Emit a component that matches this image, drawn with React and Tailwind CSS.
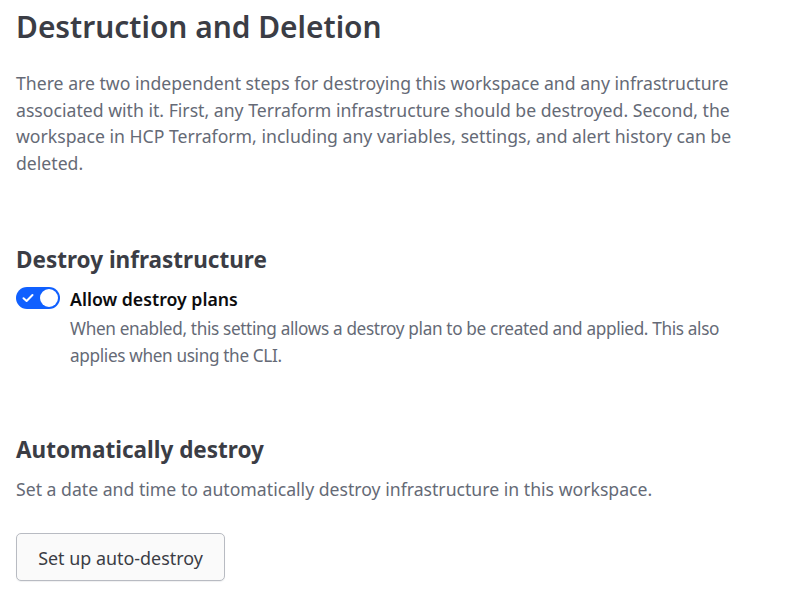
import React from "react";

export default function App() {
  return (
    <div
      className="w-[794px] min-h-[599px] bg-white pl-4 pr-[18px] pt-[8px]"
      style={{ fontFamily: '"Noto Sans", sans-serif' }}
    >
      <h1 className="text-[29.9px] font-semibold leading-[38px] text-[#3b3d45]">
        Destruction and Deletion
      </h1>
      <p className="mt-[24px] text-[17.65px] leading-[26.67px] text-[#656a76]">
        There are two independent steps for destroying this workspace and any infrastructure
        associated with it. First, any Terraform infrastructure should be destroyed. Second, the
        workspace in HCP Terraform, including any variables, settings, and alert history can be
        deleted.
      </p>

      <h2 className="mt-[68px] text-[22.5px] font-bold leading-[30px] text-[#3b3d45]">
        Destroy infrastructure
      </h2>
      <div className="mt-[10px] flex gap-[10px]">
        <div className="mt-[2px] flex h-[22px] w-[44px] shrink-0 items-center justify-between rounded-full bg-[#1060ff] pl-[6px] pr-[2px]">
          <svg width="12" height="10" viewBox="0 0 12 10" fill="none">
            <path
              d="M1.5 5.2 L4.6 8 L10.5 2"
              stroke="white"
              strokeWidth="2"
              strokeLinecap="round"
              strokeLinejoin="round"
            />
          </svg>
          <div className="h-[18px] w-[18px] rounded-full bg-white" />
        </div>
        <div>
          <div className="pt-[1px] text-[17.72px] font-semibold leading-[26.67px] text-[#0c0c0e]">
            Allow destroy plans
          </div>
          <p className="mt-[4px] text-[17.2px] leading-[26.67px] tracking-[-0.35px] text-[#656a76]">
            When enabled, this setting allows a destroy plan to be created and applied. This also
            applies when using the CLI.
          </p>
        </div>
      </div>

      <h2 className="mt-[65px] text-[22.5px] font-bold leading-[30px] text-[#3b3d45]">
        Automatically destroy
      </h2>
      <p className="mt-[11px] text-[17.65px] leading-[26.67px] text-[#656a76]">
        Set a date and time to automatically destroy infrastructure in this workspace.
      </p>
      <button
        type="button"
        className="mt-[31px] flex h-[48px] w-[209px] items-center justify-center rounded-[5px] border border-[#b8bbc2] bg-[#fafafa] pt-[1px] text-[17.9px] leading-[26.67px] text-[#3b3d45] shadow-[0_1px_1px_rgba(101,106,118,0.1)]"
      >
        Set up auto-destroy
      </button>
    </div>
  );
}
